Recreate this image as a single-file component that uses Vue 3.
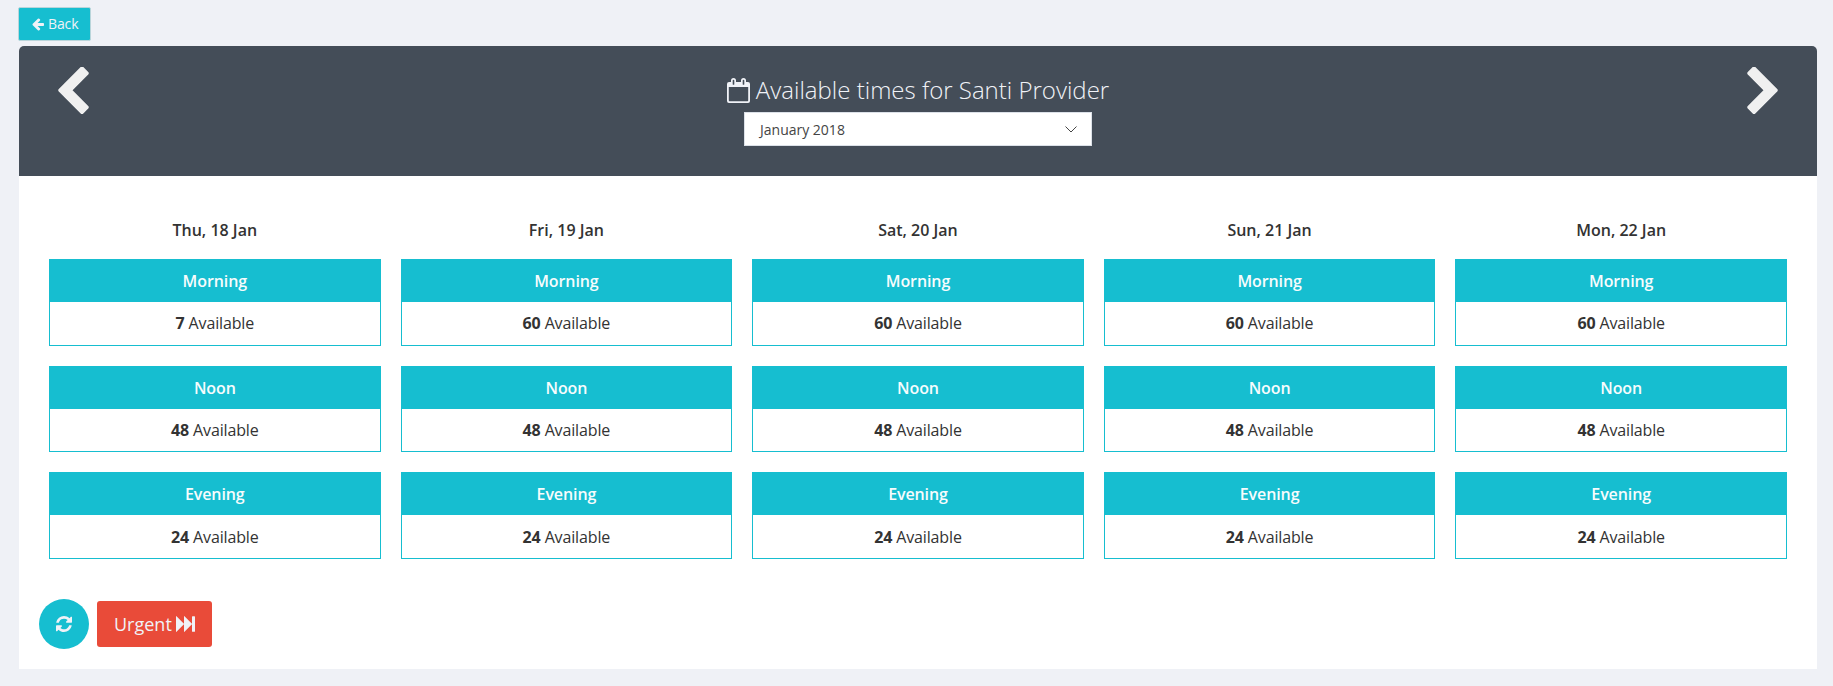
<script setup>
const days = ['Thu, 18 Jan', 'Fri, 19 Jan', 'Sat, 20 Jan', 'Sun, 21 Jan', 'Mon, 22 Jan'].map((label, i) => ({
  label,
  slots: [
    { name: 'Morning', count: i === 0 ? 7 : 60 },
    { name: 'Noon', count: 48 },
    { name: 'Evening', count: 24 },
  ],
}))
</script>

<template>
  <div class="page">
    <button class="back">
      <svg class="i-back" viewBox="0 0 1792 1792"><path d="M1664 896v128q0 53-32.5 90.5t-84.5 37.5h-704l293 294q38 36 38 90t-38 90l-75 76q-37 37-90 37-52 0-91-37l-651-652q-37-37-37-90 0-52 37-91l651-650q38-38 91-38 52 0 90 38l75 74q38 38 38 91t-38 91l-293 293h704q52 0 84.5 37.5t32.5 90.5z" /></svg>
      <span>Back</span>
    </button>
    <section class="panel">
      <header class="head">
        <svg class="chev" viewBox="410 45 1036 1593"><path d="M1427 301l-531 531 531 531q19 19 19 45t-19 45l-166 166q-19 19-45 19t-45-19l-742-742q-19-19-19-45t19-45l742-742q19-19 45-19t45 19l166 166q19 19 19 45t-19 45z" /></svg>
        <div class="center">
          <h1 class="title">
            <svg class="i-cal" viewBox="0 0 24 25"><path fill-rule="evenodd" d="M2 4H4V2.500a2.500 2.500 0 0 1 5 0V4H14V2.500a2.500 2.500 0 0 1 5 0V4H21a2 2 0 0 1 2 2V23a2 2 0 0 1-2 2H2a2 2 0 0 1-2-2V6a2 2 0 0 1 2-2zM1.800 9V22.500q0 .7.7.7H20.500q.7 0 .7-.7V9zM5.700 2.500V6.200q0 .6.8.6t.8-.6V2.500q0-.8-.8-.8t-.8.8zM15.700 2.500V6.200q0 .6.8.6t.8-.6V2.500q0-.8-.8-.8t-.8.8z" /></svg>
            <span>Available times for Santi Provider</span>
          </h1>
          <div class="select">
            <span>January 2018</span>
            <svg class="i-down" viewBox="0 0 12 7"><path d="M.5.500L6 6L11.500.500" /></svg>
          </div>
        </div>
        <svg class="chev" viewBox="346 45 1036 1593"><path d="M1363 877l-742 742q-19 19-45 19t-45-19l-166-166q-19-19-19-45t19-45l531-531-531-531q-19-19-19-45t19-45l166-166q19-19 45-19t45 19l742 742q19 19 19 45t-19 45z" /></svg>
      </header>
      <div class="days">
        <div v-for="d in days" :key="d.label" class="day">
          <div class="date">{{ d.label }}</div>
          <div v-for="s in d.slots" :key="s.name" class="slot">
            <div class="name">{{ s.name }}</div>
            <div class="avail"><b>{{ s.count }}</b> Available</div>
          </div>
        </div>
      </div>
      <footer class="actions">
        <button class="refresh">
          <svg class="i-ref" viewBox="128 128 1536 1536"><path d="M1639 1056q0 5-1 7-64 268-268 434.500t-478 166.500q-146 0-282.500-55t-243.500-157l-129 129q-19 19-45 19t-45-19-19-45v-448q0-26 19-45t45-19h448q26 0 45 19t19 45-19 45l-137 137q71 66 161 102t187 36q134 0 250-65t186-179q11-17 53-117 8-23 30-23h192q13 0 22.500 9.500t9.500 22.500zm25-800v448q0 26-19 45t-45 19h-448q-26 0-45-19t-19-45 19-45l138-138q-148-137-349-137-134 0-250 65t-186 179q-11 17-53 117-8 23-30 23h-199q-13 0-22.500-9.500t-9.500-22.500v-7q65-268 270-434.500t480-166.500q146 0 284 55.500t245 156.500l130-129q19-19 45-19t45 19 19 45z" /></svg>
        </button>
        <button class="urgent">
          <span>Urgent</span>
          <svg class="i-ff" viewBox="0 0 19 16"><path d="M0 .4Q0-.2.5.3L7.700 7.400L8 7.800V.4Q8-.2 8.500.3L15.700 7.400L16 7.800V.8Q16 .2 16.600.2H18.400Q19 .2 19 .8V15.200Q19 15.800 18.400 15.800H16.600Q16 15.800 16 15.200V8.200L15.700 8.600L8.500 15.700Q8 16.200 8 15.600V8.200L7.700 8.600L.5 15.700Q0 16.200 0 15.600z" /></svg>
        </button>
      </footer>
    </section>
  </div>
</template>

<style>
body { background: #eff1f6; }
</style>

<style scoped>
* { box-sizing: border-box; }
.page {
  height: 686px;
  padding: 7px 16px 17px 19px;
  background: #eff1f6;
  color: #333;
  font-family: "Open Sans", sans-serif;
  display: flex;
  flex-direction: column;
  align-items: stretch;
}
svg { display: block; fill: currentColor; flex: none; }
button { font-family: inherit; margin: 0; padding: 0; border: 0; color: #f0f2f7; display: flex; align-items: center; }
.back {
  align-self: flex-start;
  width: 73px;
  height: 34px;
  margin-left: -1px;
  padding: 0 0 1px 12px;
  background: #16bed0;
  border: 1px solid #b9d5da;
  border-radius: 2px;
  font-size: 14px;
  letter-spacing: -0.1px;
  gap: 3px;
}
.i-back { width: 14px; height: 14px; margin-top: 1px; }
.panel {
  margin-top: 5px;
  height: 623px;
  background: #fff;
  border-radius: 5px 5px 0 0;
  overflow: hidden;
}
.head {
  height: 130px;
  background: #444d58;
  color: #f0f0f0;
  display: flex;
  justify-content: space-between;
  padding: 21px 39px 0;
}
.chev { width: 31px; height: 47px; }
.center { display: flex; flex-direction: column; align-items: center; }
.title {
  margin: 6px 0 0;
  height: 39px;
  display: flex;
  gap: 5px;
  color: #f0f2f7;
  font-weight: 300;
  font-size: 24px;
  line-height: 33px;
}
.i-cal { width: 24px; height: 25px; margin-top: 5px; }
.select {
  width: 348px;
  height: 34px;
  background: #fff;
  border: 1px solid #dce1e8;
  color: #444;
  font-size: 14px;
  display: flex;
  align-items: center;
  justify-content: space-between;
  padding: 0 14px 0 15px;
}
.i-down { width: 12px; height: 7px; fill: none; stroke: #444; }
.days { display: flex; gap: 20px; padding: 39px 30px 0; }
.day { flex: 1; text-align: center; font-size: 16px; }
.date { height: 44px; line-height: 30px; font-weight: 600; }
.slot { height: 86.600px; margin-bottom: 20px; border: 1px solid #16bed0; background: #fff; }
.name { height: 42px; line-height: 42px; background: #16bed0; color: #f7fcfd; font-weight: 600; letter-spacing: -0.1px; }
.avail { line-height: 43px; letter-spacing: -0.14px; }
.slot:last-child .avail { line-height: 44px; }
.actions { display: flex; align-items: center; gap: 8px; padding: 20px 20px 0; }
.refresh { width: 50px; height: 50px; border-radius: 50%; background: #16bed0; justify-content: center; }
.i-ref { width: 16px; height: 16px; }
.urgent { width: 115px; height: 46px; background: #e94b39; border-radius: 3px; padding-left: 17px; font-size: 18px; gap: 4px; }
.i-ff { width: 19px; height: 16px; }
</style>
